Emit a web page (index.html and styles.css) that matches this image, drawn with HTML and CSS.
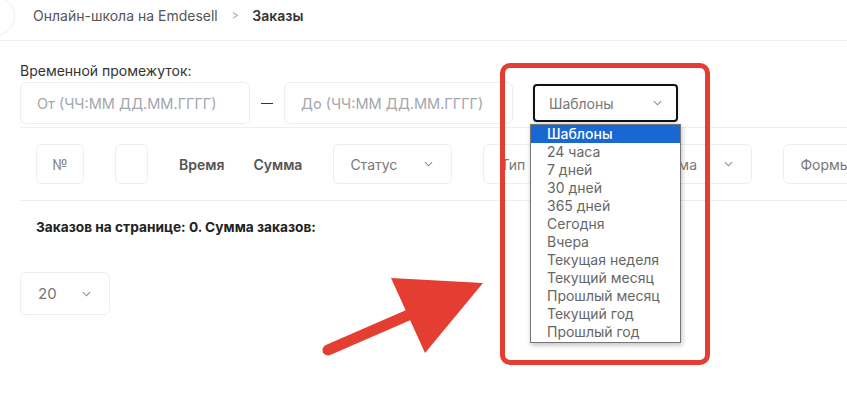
FILE: index.html
```html
<!DOCTYPE html>
<html lang="ru">
<head>
    <meta charset="UTF-8">
    <title>Заказы</title>
    <link rel="stylesheet" href="styles.css">
</head>
<body>
    <div class="topbar">
        <div class="back"></div>
        <span class="crumb">Онлайн-школа на Emdesell</span>
        <span class="sep">&gt;</span>
        <span class="crumb current">Заказы</span>
    </div>

    <div class="content">
        <div class="label">Временной промежуток:</div>
        <div class="period-row">
            <div class="field from">От (ЧЧ:ММ ДД.ММ.ГГГГ)</div>
            <span class="dash"></span>
            <div class="field to">До (ЧЧ:ММ ДД.ММ.ГГГГ)</div>
            <div class="select templates">
                <span>Шаблоны</span>
                <svg class="chev" viewBox="0 0 10 6"><path d="M1 1l4 4 4-4"/></svg>
            </div>
        </div>

        <div class="head-row">
            <div class="box num">№</div>
            <div class="box check"></div>
            <div class="col">Время</div>
            <div class="col">Сумма</div>
            <div class="box select status">
                <span>Статус</span>
                <svg class="chev" viewBox="0 0 10 6"><path d="M1 1l4 4 4-4"/></svg>
            </div>
            <div class="box select type">
                <span>Тип</span>
                <svg class="chev" viewBox="0 0 10 6"><path d="M1 1l4 4 4-4"/></svg>
            </div>
            <div class="box select system">
                <span>Система</span>
                <svg class="chev" viewBox="0 0 10 6"><path d="M1 1l4 4 4-4"/></svg>
            </div>
            <div class="box select forms">
                <span>Формы</span>
            </div>
        </div>

        <div class="summary">Заказов на странице: 0. Сумма заказов:</div>

        <div class="box select per-page">
            <span>20</span>
            <svg class="chev" viewBox="0 0 10 6"><path d="M1 1l4 4 4-4"/></svg>
        </div>
    </div>

    <ul class="dropdown">
        <li class="active">Шаблоны</li>
        <li>24 часа</li>
        <li>7 дней</li>
        <li>30 дней</li>
        <li>365 дней</li>
        <li>Сегодня</li>
        <li>Вчера</li>
        <li>Текущая неделя</li>
        <li>Текущий месяц</li>
        <li>Прошлый месяц</li>
        <li>Текущий год</li>
        <li>Прошлый год</li>
    </ul>

    <div class="highlight"></div>
    <svg class="arrow" width="847" height="395" viewBox="0 0 847 395">
        <line x1="328" y1="350" x2="420" y2="310" stroke="#e43d31" stroke-width="11" stroke-linecap="round"/>
        <polygon points="391,278 483,283 425,353" fill="#e43d31"/>
    </svg>
</body>
</html>
```

FILE: styles.css
```css
body {
    margin: 0;
    font-family: 'Inter', 'Noto Sans', sans-serif;
    font-size: 14px;
    color: #333;
    background: #fff;
    overflow: hidden;
    position: relative;
    width: 847px;
    height: 395px;
}

.topbar {
    display: flex;
    align-items: center;
    height: 40px;
    border-bottom: 1px solid #eef0f3;
    overflow: hidden;
}

.back {
    width: 38px;
    height: 38px;
    margin-left: -25px;
    margin-top: -8px;
    border: 1px solid #eceef2;
    border-radius: 50%;
    flex-shrink: 0;
}

.crumb {
    margin-left: 18px;
    color: #555;
    margin-top: -10px;
}

.crumb.current {
    margin-left: 13px;
    font-weight: 600;
    color: #333;
}

.sep {
    margin-left: 13px;
    margin-top: -10px;
    color: #aaa;
    font-size: 13px;
    transform: scaleX(0.8);
}

.content {
    padding-left: 20px;
}

.label {
    margin-top: 20px;
    font-size: 14px;
    color: #333;
    line-height: 20px;
}

.period-row {
    display: flex;
    align-items: center;
    padding-top: 1px;
    padding-bottom: 3px;
    border-bottom: 1px solid #eceef2;
}

.field {
    border: 1px solid #eceef2;
    border-radius: 6px;
    display: flex;
    align-items: center;
    padding-left: 16px;
    color: #a3a6ad;
    font-size: 14.5px;
    box-sizing: border-box;
    height: 42px;
}

.field.from {
    width: 230px;
}

.field.to {
    width: 229px;
}

.dash {
    width: 12px;
    height: 1px;
    background: #333;
    margin: 0 11px;
}

.select {
    display: flex;
    align-items: center;
    justify-content: space-between;
    box-sizing: border-box;
    color: #777;
}

.select.templates {
    margin-left: 20px;
    width: 145px;
    height: 38px;
    border: 2px solid #111;
    border-radius: 4px;
    padding: 0 14px 0 14px;
    box-shadow: 0 1px 3px rgba(0, 0, 0, 0.15);
}

.chev {
    width: 9px;
    height: 6px;
    fill: none;
    stroke: #8a8d94;
    stroke-width: 1.2;
}

.head-row {
    display: flex;
    align-items: center;
    gap: 31px;
    padding: 16px 0 16px 16px;
    border-bottom: 1px solid #eceef2;
    white-space: nowrap;
}

.box {
    height: 40px;
    border: 1px solid #eceef2;
    border-radius: 6px;
    box-sizing: border-box;
    display: flex;
    align-items: center;
    flex-shrink: 0;
}

.box.num {
    width: 48px;
    justify-content: center;
    color: #888;
}

.box.check {
    width: 33px;
}

.col {
    font-weight: 600;
    color: #555;
}

.col + .col {
    margin-left: -2px;
}

.box.select {
    padding: 0 18px 0 16px;
}

.box.status {
    width: 119px;
}

.box.type {
    width: 106px;
}

.box.system {
    width: 132px;
}

.box.forms {
    width: 120px;
}

.summary {
    margin-top: 18px;
    margin-left: 16px;
    font-size: 13.7px;
    font-weight: 700;
    color: #222;
}

.box.per-page {
    margin-top: 37px;
    width: 90px;
    height: 43px;
    padding: 0 18px 0 17px;
    font-size: 15px;
}

.dropdown {
    position: absolute;
    left: 530px;
    top: 124px;
    width: 151px;
    margin: 0;
    padding: 0 0 1px;
    list-style: none;
    background: #fff;
    border: 1px solid #767676;
    box-sizing: border-box;
    box-shadow: 1px 2px 5px rgba(0, 0, 0, 0.25);
    font-size: 14px;
    color: #666;
}

.dropdown li {
    height: 18px;
    line-height: 18px;
    padding-left: 16px;
}

.dropdown li.active {
    background: #1967d2;
    color: #fff;
    font-weight: 500;
}

.highlight {
    position: absolute;
    left: 500px;
    top: 63px;
    width: 210px;
    height: 302px;
    border: 5px solid #e43d31;
    border-radius: 10px;
    box-sizing: border-box;
}

.arrow {
    position: absolute;
    left: 0;
    top: 0;
    pointer-events: none;
}
```
